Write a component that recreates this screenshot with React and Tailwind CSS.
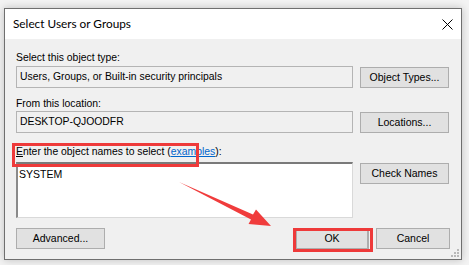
import React from "react";

const ui = { fontFamily: '"Liberation Sans", Arial, sans-serif' };
const title = { fontFamily: 'Lato, "Liberation Sans", sans-serif' };

const Button = ({ children, className = "" }) => (
    <div
        className={`flex items-center justify-center h-[21px] bg-[#e1e1e1] border border-[#adadad] text-[10.5px] text-black ${className}`}
    >
        {children}
    </div>
);

const ReadOnlyBox = ({ children }) => (
    <div className="flex items-center w-[337px] h-[22px] border border-[#b4b4b4] bg-[#f0f0f0] pl-[3px] text-[10.4px] text-black">
        {children}
    </div>
);

const App = () => {
    return (
        <div className="relative w-[469px] h-[265px] bg-[#f3f3f3] overflow-hidden" style={ui}>
            <div className="ml-[4px] mt-[8px] w-[458px] h-[252px] flex flex-col border border-[#6f6f6f] bg-[#f0f0f0] shadow-[0_0_8px_rgba(0,0,0,0.22)]">
                {/* Title bar */}
                <div className="flex items-center justify-between h-[30px] bg-white pl-[8px] pr-[8px]">
                    <span className="text-[11.8px] text-black" style={title}>
                        Select Users or Groups
                    </span>
                    <svg width="11" height="11" viewBox="0 0 11 11">
                        <path d="M0.5 0.5 L10.5 10.5 M10.5 0.5 L0.5 10.5" stroke="#000" strokeWidth="1" />
                    </svg>
                </div>

                {/* Body */}
                <div className="relative flex-1 flex flex-col px-[11px]">
                    <div className="mt-[12px] h-[13px] leading-[13px] text-[10.4px] text-black">Select this object type:</div>
                    <div className="mt-[2px] flex items-start gap-[7px]">
                        <ReadOnlyBox>Users, Groups, or Built-in security principals</ReadOnlyBox>
                        <Button className="mt-[1px] w-[89px]">Object Types...</Button>
                    </div>

                    <div className="mt-[9px] h-[13px] leading-[13px] text-[10.4px] text-black">From this location:</div>
                    <div className="mt-[1px] flex items-start gap-[7px]">
                        <ReadOnlyBox>DESKTOP-QJOODFR</ReadOnlyBox>
                        <Button className="mt-[1px] w-[89px]">Locations...</Button>
                    </div>

                    <div className="mt-[12px] h-[13px] leading-[13px] text-[10.4px] text-black">
                        <span className="underline">E</span>nter the object names to select (
                        <span className="text-[#0066cc] underline">examples</span>):
                    </div>
                    <div className="mt-[4px] flex items-start gap-[7px]">
                        <div className="w-[337px] h-[56px] bg-white border-t-2 border-l-2 border-r border-b border-t-[#7a7a7a] border-l-[#8a8a8a] border-r-[#d9d9d9] border-b-[#d9d9d9] pl-[1px] pt-[4px] text-[10.5px] leading-[13px] text-black">
                            SYSTEM
                        </div>
                        <Button className="mt-[1px] w-[89px]">Check Names</Button>
                    </div>

                    <div className="mt-[10px] flex items-center">
                        <Button className="w-[89px]">Advanced...</Button>
                        <div className="flex-1" />
                        <Button className="w-[74px] border-x-2 border-[#0078d7]">OK</Button>
                        <Button className="ml-[7px] w-[74px]">Cancel</Button>
                    </div>

                    {/* resize grip */}
                    <svg className="absolute right-[2px] bottom-[2px]" width="8" height="8" viewBox="0 0 8 8">
                        <g fill="#b8b8b8">
                            <rect x="6" y="0" width="2" height="2" />
                            <rect x="3" y="3" width="2" height="2" />
                            <rect x="6" y="3" width="2" height="2" />
                            <rect x="0" y="6" width="2" height="2" />
                            <rect x="3" y="6" width="2" height="2" />
                            <rect x="6" y="6" width="2" height="2" />
                        </g>
                    </svg>
                </div>
            </div>

            {/* annotations */}
            <div className="absolute left-[12px] top-[143px] w-[187px] h-[24px] border-[3px] border-[#ee3a3a]" />
            <div className="absolute left-[293px] top-[228px] w-[80px] h-[24px] border-[3px] border-[#ee3a3a]" />
            <svg className="absolute left-0 top-0 pointer-events-none" width="469" height="265" viewBox="0 0 469 265">
                <path d="M179 182 L253 214.5 L256 209.5 L271 226 L248.5 224 L251 219.5 Z" fill="#f03c3c" />
            </svg>
        </div>
    );
};

export default App;
